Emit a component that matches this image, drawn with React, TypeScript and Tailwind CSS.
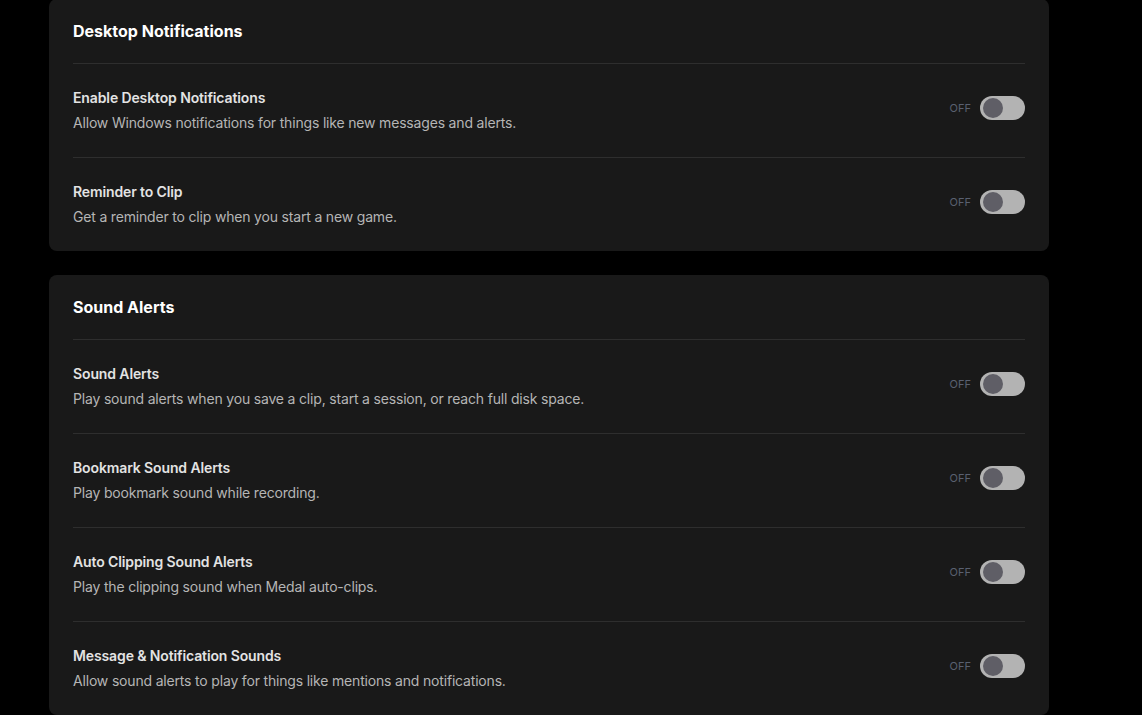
import React from "react";

type Setting = { title: string; desc: string };

const desktop: Setting[] = [
  {
    title: "Enable Desktop Notifications",
    desc: "Allow Windows notifications for things like new messages and alerts.",
  },
  { title: "Reminder to Clip", desc: "Get a reminder to clip when you start a new game." },
];

const sounds: Setting[] = [
  {
    title: "Sound Alerts",
    desc: "Play sound alerts when you save a clip, start a session, or reach full disk space.",
  },
  { title: "Bookmark Sound Alerts", desc: "Play bookmark sound while recording." },
  { title: "Auto Clipping Sound Alerts", desc: "Play the clipping sound when Medal auto-clips." },
  {
    title: "Message & Notification Sounds",
    desc: "Allow sound alerts to play for things like mentions and notifications.",
  },
];

const Toggle = () => (
  <div className="flex items-center gap-[9px] mb-[5px]">
    <span className="text-[11px] text-[#596070]">OFF</span>
    <div className="w-[45px] h-[24px] rounded-full bg-[#b3b3b3] flex items-center px-[3px]">
      <div className="w-[20px] h-[20px] rounded-full bg-[#5f5e66]" />
    </div>
  </div>
);

const Card = ({ heading, items }: { heading: string; items: Setting[] }) => (
  <div className="w-[1000px] rounded-lg bg-[#191919] px-6">
    <h2 className="py-5 text-[16px] leading-6 font-bold text-white border-b border-[#2e2e2e]">
      {heading}
    </h2>
    {items.map((s, i) => {
      const last = i === items.length - 1;
      return (
        <div
          key={s.title}
          className={`flex items-center justify-between ${
            last ? "h-[93px]" : "h-[94px] border-b border-[#2e2e2e]"
          }`}
        >
          <div className="mb-[1px]">
            <p className="text-[14px] leading-5 font-semibold text-[#e3e3e3] tracking-[-0.12px]">
              {s.title}
            </p>
            <p className="mt-[5px] text-[14px] leading-5 text-[#b5b5b5] tracking-[-0.18px]">
              {s.desc}
            </p>
          </div>
          <Toggle />
        </div>
      );
    })}
  </div>
);

export default function App() {
  return (
    <div
      className="min-h-screen bg-black pl-[49px] overflow-hidden"
      style={{ fontFamily: "Inter, 'Noto Sans', sans-serif" }}
    >
      <div className="mt-[-1px] flex flex-col gap-[24px]">
        <Card heading="Desktop Notifications" items={desktop} />
        <Card heading="Sound Alerts" items={sounds} />
      </div>
    </div>
  );
}
